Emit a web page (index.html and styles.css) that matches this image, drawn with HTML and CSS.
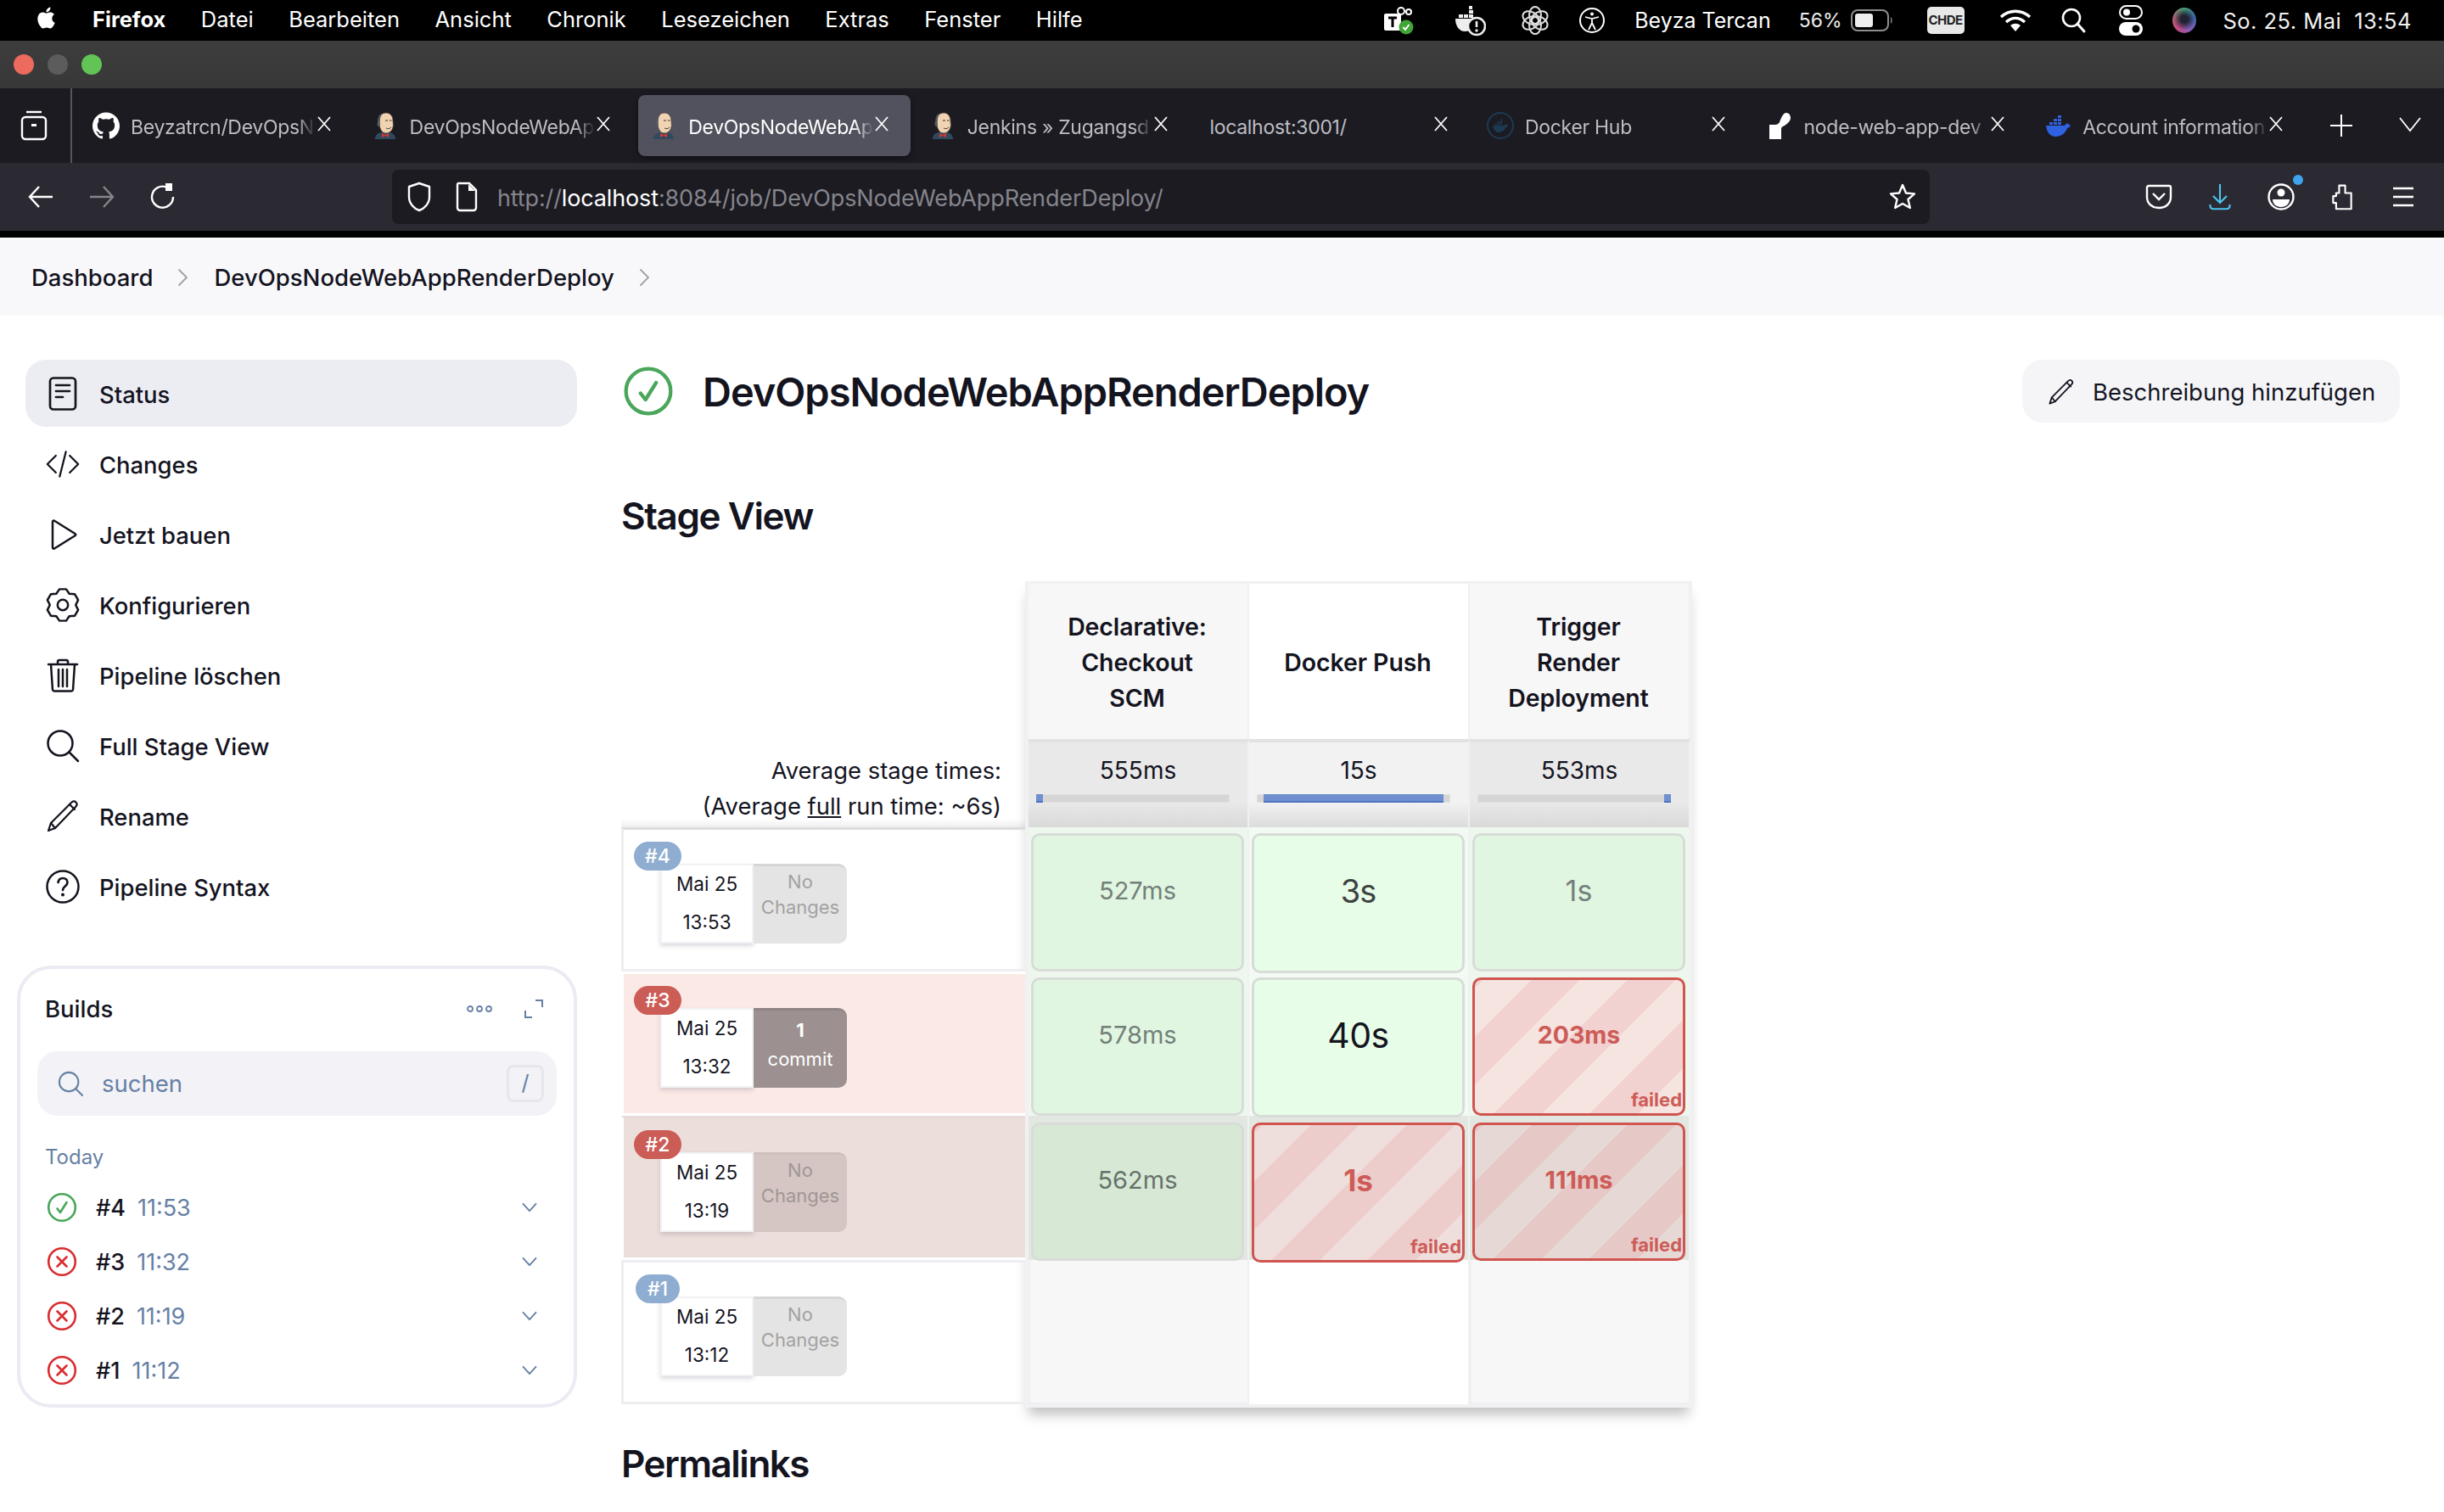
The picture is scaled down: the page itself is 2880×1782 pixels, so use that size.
FILE: index.html
```html
<!DOCTYPE html>
<html lang="de">
<head>
<meta charset="utf-8">
<title>DevOpsNodeWebAppRenderDeploy</title>
<link rel="stylesheet" href="styles.css">
</head>
<body>
<svg class="sprite" aria-hidden="true">
  <symbol id="jenkins" viewBox="0 0 26 32">
    <path d="M1 32c0-4 2-7 7-8l5 1 5-1c5 1 7 4 7 8z" fill="#2f4a5e"/>
    <path d="M6 11C5 5 9 1 14 1c5 0 8 4 8 9 0 3 1 5 0 8-1 4-4 7-8 7-4 0-6-3-7-6-1-2-1-5-1-8z" fill="#efd3b2" stroke="#4a4038" stroke-width=".8"/>
    <path d="M8 2C5 4 4 8 4 12c-1 1-1 4 1 5l2 1c0-3-1-6 0-9 0-3 1-5 3-7z" fill="#55585c"/>
    <path d="M13 10h3M18 10h2.500" stroke="#3a3028" stroke-width="1"/>
    <path d="M14 19c2 1 4 1 6-1" fill="none" stroke="#3a3028" stroke-width=".9"/>
    <path d="M9 25l4 2 4-2v5l-4-2-4 2z" fill="#d33833"/>
  </symbol>
  <symbol id="close" viewBox="0 0 18 18"><path d="M2 1l14 16M16 1L2 17" fill="none" stroke="#fff" stroke-width="1.800"/></symbol>
  <symbol id="github" viewBox="0 0 24 24"><path fill="#fff" d="M12 .297c-6.63 0-12 5.373-12 12 0 5.303 3.438 9.8 8.205 11.385.6.113.82-.258.82-.577 0-.285-.01-1.04-.015-2.04-3.338.724-4.042-1.61-4.042-1.61C4.422 18.07 3.633 17.7 3.633 17.7c-1.087-.744.084-.729.084-.729 1.205.084 1.838 1.236 1.838 1.236 1.07 1.835 2.809 1.305 3.495.998.108-.776.417-1.305.76-1.605-2.665-.3-5.466-1.332-5.466-5.93 0-1.31.465-2.38 1.235-3.22-.135-.303-.54-1.523.105-3.176 0 0 1.005-.322 3.3 1.23.96-.267 1.98-.399 3-.405 1.02.006 2.04.138 3 .405 2.28-1.552 3.285-1.23 3.285-1.23.645 1.653.24 2.873.12 3.176.765.84 1.23 1.91 1.23 3.22 0 4.61-2.805 5.625-5.475 5.92.42.36.81 1.096.81 2.22 0 1.606-.015 2.896-.015 3.286 0 .315.21.69.825.57C20.565 22.092 24 17.592 24 12.297c0-6.627-5.373-12-12-12"/></symbol>
  <symbol id="whale" viewBox="0 0 32 32">
    <path fill="currentColor" d="M2 16h22c1-2 3-3 4-2 1 .6 2 1.400 3 2-1 2-3 3-4 3-2 6-7 10-14 10C7 29 3 24 2 16z"/>
    <path fill="currentColor" d="M6 12h4v3H6zM11 12h4v3h-4zM16 12h4v3h-4zM11 8h4v3h-4zM16 8h4v3h-4zM16 4h4v3h-4z"/>
  </symbol>
  <symbol id="chev" viewBox="0 0 24 24"><path d="M3 7l9 10 9-10" fill="none" stroke="currentColor" stroke-width="2.200" stroke-linecap="round" stroke-linejoin="round"/></symbol>
  <symbol id="crumb" viewBox="0 0 16 24"><path d="M3 3l9 9-9 9" fill="none" stroke="#9ea0ab" stroke-width="1.800" stroke-linecap="round" stroke-linejoin="round"/></symbol>
  <symbol id="pencil" viewBox="0 0 40 40"><g fill="none" stroke="currentColor" stroke-width="2.200" stroke-linejoin="round" stroke-linecap="round"><path d="M3 37l3-9L30 4c2-2 4-2 5.500-.5s1.500 3.500-.5 5.500L11 34z"/><path d="M28 6l6 6M6 28l5 6"/></g></symbol>
  <symbol id="fail" viewBox="0 0 36 36"><circle cx="18" cy="18" r="15.800" fill="none" stroke="#d92c2f" stroke-width="2.600"/><path d="M12.500 12.500l11 11M23.500 12.500l-11 11" fill="none" stroke="#d92c2f" stroke-width="2.600" stroke-linecap="round"/></symbol>
  <symbol id="ok" viewBox="0 0 36 36"><circle cx="18" cy="18" r="15.800" fill="none" stroke="#4aa65a" stroke-width="2.600"/><path d="M12.500 19.500l3.500 4.500L23.500 12" fill="none" stroke="#4aa65a" stroke-width="2.600" stroke-linecap="round" stroke-linejoin="round"/></symbol>
</svg>

<header class="menubar">
  <svg class="m-apple" viewBox="0 0 24 24"><path fill="#fff" d="M12.152 6.896c-.948 0-2.415-1.078-3.96-1.04-2.04.027-3.91 1.183-4.961 3.014-2.117 3.675-.546 9.103 1.519 12.09 1.013 1.454 2.208 3.09 3.792 3.039 1.52-.065 2.09-.987 3.935-.987 1.831 0 2.35.987 3.96.948 1.637-.026 2.676-1.48 3.676-2.948 1.156-1.688 1.636-3.325 1.662-3.415-.039-.013-3.182-1.221-3.22-4.857-.026-3.04 2.48-4.494 2.597-4.559-1.429-2.09-3.623-2.324-4.39-2.376-2-.156-3.675 1.09-4.61 1.09zM15.53 3.83c.843-1.012 1.4-2.427 1.245-3.83-1.207.052-2.662.805-3.532 1.818-.78.896-1.454 2.338-1.273 3.714 1.338.104 2.715-.688 3.559-1.701"/></svg>
  <nav class="menu-left">
    <span class="menu-app">Firefox</span><span>Datei</span><span>Bearbeiten</span><span>Ansicht</span><span>Chronik</span><span>Lesezeichen</span><span>Extras</span><span>Fenster</span><span>Hilfe</span>
  </nav>
  <div class="menu-right">
    <svg class="s-teams" viewBox="0 0 40 40"><g fill="#fff"><rect x="4" y="12" width="20" height="20" rx="2"/><circle cx="24" cy="9" r="4" fill="none" stroke="#fff" stroke-width="2"/><circle cx="33" cy="10" r="3" fill="none" stroke="#fff" stroke-width="2"/></g><path d="M9 17h10M14 17v11" stroke="#000" stroke-width="3"/><path d="M24 22h10v12H24z" fill="#fff"/><circle cx="30" cy="28" r="8.500" fill="#3fa535"/><path d="M26.500 28l2.500 3 4.500-6" fill="none" stroke="#fff" stroke-width="2"/></svg>
    <svg class="s-docker" viewBox="0 0 40 40"><path d="M4 18h22c1 7-2 15-11 15-7 0-11-7-11-15z" fill="#eee"/><path d="M8 13h5v4H8zM14 13h5v4h-5zM20 13h5v4h-5zM20 8h5v4h-5zM20 3h4v4h-4z" fill="#eee"/><circle cx="29" cy="27" r="10" fill="#000" stroke="#eee" stroke-width="2.500"/><path d="M29 21v7" stroke="#eee" stroke-width="2.600"/><circle cx="29" cy="32" r="1.700" fill="#eee"/></svg>
    <svg class="s-openai" viewBox="0 0 36 36"><g fill="none" stroke="#ddd" stroke-width="2"><ellipse cx="18" cy="12" rx="7" ry="10"/><ellipse cx="18" cy="12" rx="7" ry="10" transform="rotate(60 18 18)"/><ellipse cx="18" cy="12" rx="7" ry="10" transform="rotate(120 18 18)"/><ellipse cx="18" cy="12" rx="7" ry="10" transform="rotate(180 18 18)"/><ellipse cx="18" cy="12" rx="7" ry="10" transform="rotate(240 18 18)"/><ellipse cx="18" cy="12" rx="7" ry="10" transform="rotate(300 18 18)"/></g></svg>
    <svg class="s-access" viewBox="0 0 36 36"><circle cx="18" cy="18" r="14" fill="none" stroke="#fff" stroke-width="2"/><circle cx="18" cy="10.500" r="2" fill="#fff"/><path d="M10 14l8 2 8-2M18 16v5l-4 8M18 21l4 8" fill="none" stroke="#fff" stroke-width="1.800"/></svg>
    <span class="s-name">Beyza Tercan</span>
    <span class="s-pct">56%</span>
    <svg class="s-batt" viewBox="0 0 50 28"><rect x="1" y="2" width="43" height="24" rx="7" fill="none" stroke="#8d8d8d" stroke-width="2"/><rect x="5" y="6" width="21" height="16" rx="3" fill="#eee"/><path d="M47 10c2 1 2 7 0 8z" fill="#8d8d8d"/></svg>
    <span class="s-chde">CHDE</span>
    <svg class="s-wifi" viewBox="0 0 40 28"><g fill="none" stroke="#fff" stroke-width="3.400"><path d="M3 10c10-9 24-9 34 0"/><path d="M9 16c7-6 15-6 22 0"/></g><path d="M14 20c4-3 8-3 12 0l-6 7z" fill="#fff"/></svg>
    <svg class="s-search" viewBox="0 0 32 32"><circle cx="13" cy="13" r="10" fill="none" stroke="#fff" stroke-width="2.600"/><path d="M20 20l8 9" stroke="#fff" stroke-width="3" stroke-linecap="round"/></svg>
    <svg class="s-ctrl" viewBox="0 0 30 36"><rect x="2" y="1" width="26" height="15" rx="7.500" fill="none" stroke="#fff" stroke-width="2"/><circle cx="10" cy="8.500" r="4" fill="#fff"/><rect x="1" y="20" width="28" height="16" rx="8" fill="#fff"/><circle cx="21" cy="28" r="4.500" fill="#000"/></svg>
    <span class="s-siri"></span>
    <span class="s-date">So. 25. Mai&nbsp; 13:54</span>
  </div>
</header>

<div class="titlebar">
  <span class="light light-red"></span><span class="light light-gray"></span><span class="light light-green"></span>
</div>

<div class="tabstrip">
  <div class="tabview">
    <svg class="ic-view" viewBox="0 0 32 36"><g fill="none" stroke="#fff" stroke-width="2.400"><path d="M7 2h18"/><rect x="2" y="8" width="28" height="26" rx="4"/></g><rect x="13" y="16" width="6" height="3" fill="#fff"/></svg>
  </div>
  <div class="tabs">
    <div class="tab"><svg class="fav fav-round"><use href="#github"/></svg><span class="tab-title">Beyzatrcn/DevOpsN</span><svg class="tab-x"><use href="#close"/></svg></div>
    <div class="tab"><svg class="fav"><use href="#jenkins"/></svg><span class="tab-title">DevOpsNodeWebAp</span><svg class="tab-x"><use href="#close"/></svg></div>
    <div class="tab tab-active"><svg class="fav"><use href="#jenkins"/></svg><span class="tab-title">DevOpsNodeWebAp</span><svg class="tab-x"><use href="#close"/></svg></div>
    <div class="tab"><svg class="fav"><use href="#jenkins"/></svg><span class="tab-title">Jenkins » Zugangsd</span><svg class="tab-x"><use href="#close"/></svg></div>
    <div class="tab tab-nofav"><span class="tab-title">localhost:3001/</span><svg class="tab-x"><use href="#close"/></svg></div>
    <div class="tab"><svg class="fav fav-hub" viewBox="0 0 32 32"><circle cx="16" cy="16" r="15" fill="none" stroke="#1d3a53" stroke-width="2"/><g transform="translate(6 6) scale(.62)" color="#1d3a53"><use href="#whale" width="32" height="32"/></g></svg><span class="tab-title">Docker Hub</span><svg class="tab-x"><use href="#close"/></svg></div>
    <div class="tab"><svg class="fav" viewBox="0 0 32 32"><path fill="#fff" d="M4 32V15h7c2 0 4-1 5-3 2-5 4-11 8-11 4 0 5 4 5 6 0 4-5 8-9 10-2 1-2 2-2 4v11H4z"/></svg><span class="tab-title">node-web-app-dev</span><svg class="tab-x"><use href="#close"/></svg></div>
    <div class="tab"><svg class="fav fav-blue"><use href="#whale"/></svg><span class="tab-title">Account information</span><svg class="tab-x"><use href="#close"/></svg></div>
  </div>
  <svg class="tab-plus" viewBox="0 0 26 26"><path d="M13 0v26M0 13h26" stroke="#fff" stroke-width="2"/></svg>
  <svg class="tab-list" viewBox="0 0 26 26"><path d="M1 6l12 15L25 6" fill="none" stroke="#fff" stroke-width="1.800"/></svg>
</div>

<div class="toolbar">
  <svg class="tb-ic" viewBox="0 0 32 32"><path d="M30 16H3M14 4L3 16l11 12" fill="none" stroke="#fff" stroke-width="2.400"/></svg>
  <svg class="tb-ic tb-gap tb-dim" viewBox="0 0 32 32"><path d="M2 16h27M18 4l11 12-11 12" fill="none" stroke="#85858c" stroke-width="2.400"/></svg>
  <svg class="tb-ic tb-gap" viewBox="0 0 32 32"><path d="M20 4.500A12.500 12.500 0 1 0 28 16" fill="none" stroke="#fff" stroke-width="2.400"/><path d="M19 0h8v9h-8z" fill="#fff"/></svg>
  <div class="urlbar">
    <svg class="url-ic" viewBox="0 0 28 36"><path d="M14 2l12 4v12c0 8-6 14-12 16C8 32 2 26 2 18V6z" fill="none" stroke="#fff" stroke-width="2.400" stroke-linejoin="round"/></svg>
    <svg class="url-ic url-page" viewBox="0 0 28 36"><path d="M4 2h13l8 8v21a3 3 0 0 1-3 3H6a3 3 0 0 1-3-3V3z" fill="none" stroke="#fff" stroke-width="2.400"/><path d="M16 3v8h8z" fill="#fff"/></svg>
    <span class="url-text">http://<b class="url-host">localhost</b>:8084/job/DevOpsNodeWebAppRenderDeploy/</span>
    <svg class="url-star" viewBox="0 0 32 32"><path d="M16 2l4 9.500 10 .9-7.500 6.600 2.300 10L16 24l-8.800 5 2.300-10L2 12.400l10-.9z" fill="none" stroke="#fff" stroke-width="2.400" stroke-linejoin="round"/></svg>
  </div>
  <div class="tb-right">
    <svg class="tb-r" viewBox="0 0 32 32"><path d="M4 3h24a2 2 0 0 1 2 2v11c0 8-6 13-14 13S2 24 2 16V5a2 2 0 0 1 2-2z" fill="none" stroke="#fff" stroke-width="2.400"/><path d="M9 12l7 7 7-7" fill="none" stroke="#fff" stroke-width="2.400"/></svg>
    <svg class="tb-r" viewBox="0 0 32 36"><path d="M16 1v24M7 17l9 9 9-9M3 28v2a4 4 0 0 0 4 4h18a4 4 0 0 0 4-4v-2" fill="none" stroke="#4ec3ee" stroke-width="2.400"/></svg>
    <span class="tb-acc">
      <svg class="tb-r" viewBox="0 0 32 32"><circle cx="16" cy="16" r="14.500" fill="none" stroke="#fff" stroke-width="2.400"/><circle cx="16" cy="11" r="4.500" fill="#fff"/><path d="M6 19h20c0 5-4 9-10 9S6 24 6 19z" fill="#fff"/></svg>
      <span class="tb-dot"></span>
    </span>
    <svg class="tb-r" viewBox="0 0 32 36"><path d="M12 3h8v10h8v21H8v-8H4v-9h4v-4h4z" fill="none" stroke="#fff" stroke-width="2.400" stroke-linejoin="round"/></svg>
    <svg class="tb-r" viewBox="0 0 32 32"><path d="M4 6h24M4 16h24M4 26h24" stroke="#fff" stroke-width="2.400"/></svg>
  </div>
</div>
<div class="chrome-edge"></div>

<div class="breadcrumbs">
  <span>Dashboard</span><svg class="crumb-sep"><use href="#crumb"/></svg>
  <span>DevOpsNodeWebAppRenderDeploy</span><svg class="crumb-sep"><use href="#crumb"/></svg>
</div>

<div class="layout">
  <aside class="sidebar">
    <ul class="tasks">
      <li class="task task-on"><svg class="task-ic" viewBox="0 0 40 40"><g fill="none" stroke="currentColor" stroke-width="2.700" stroke-linecap="round"><rect x="5" y="1.500" width="30" height="37" rx="4"/><path d="M12 10h16M12 17h16M12 24h8"/></g></svg>Status</li>
      <li class="task"><svg class="task-ic" viewBox="0 0 44 40"><path d="M13 9L2 20l11 11M31 9l11 11-11 11M26 4l-8 32" fill="none" stroke="currentColor" stroke-width="2.500" stroke-linecap="round" stroke-linejoin="round"/></svg>Changes</li>
      <li class="task"><svg class="task-ic" viewBox="0 0 40 40"><path d="M8 5c0-1.500 1-2 2.500-1l24 15c1 .6 1 1.600 0 2.200l-24 15c-1.500 1-2.500.4-2.500-1z" fill="none" stroke="currentColor" stroke-width="2.500" stroke-linejoin="round"/></svg>Jetzt bauen</li>
      <li class="task"><svg class="task-ic" viewBox="3 3 42 42"><polygon points="19.840,4.440 28.160,4.440 32,10.140 38.860,10.620 43.020,17.820 40,24 43.020,30.180 38.860,37.380 32,37.860 28.160,43.560 19.840,43.560 16,37.860 9.140,37.380 4.980,30.180 8,24 4.980,17.820 9.140,10.620 16,10.140" fill="none" stroke="currentColor" stroke-width="2.600" stroke-linejoin="round"/><circle cx="24" cy="24" r="6.500" fill="none" stroke="currentColor" stroke-width="2.600"/></svg>Konfigurieren</li>
      <li class="task"><svg class="task-ic" viewBox="0 0 40 40"><g fill="none" stroke="currentColor" stroke-width="2.500" stroke-linecap="round" stroke-linejoin="round"><path d="M3 7h34M14 7V4a2 2 0 0 1 2-2h8a2 2 0 0 1 2 2v3M6 7l2 30a2 2 0 0 0 2 1.500h20a2 2 0 0 0 2-1.500l2-30"/><path d="M15 13v20M20 13v20M25 13v20"/></g></svg>Pipeline löschen</li>
      <li class="task"><svg class="task-ic" viewBox="0 0 40 40"><circle cx="17" cy="17" r="14.500" fill="none" stroke="currentColor" stroke-width="2.500"/><path d="M28 28l10 10" stroke="currentColor" stroke-width="2.500" stroke-linecap="round"/></svg>Full Stage View</li>
      <li class="task"><svg class="task-ic"><use href="#pencil"/></svg>Rename</li>
      <li class="task"><svg class="task-ic" viewBox="0 0 40 40"><circle cx="20" cy="20" r="18.500" fill="none" stroke="currentColor" stroke-width="2.500"/><path d="M14.500 15c.5-3.500 3-5 5.500-5 3 0 5.500 2 5.500 5 0 4.500-5.500 4.500-5.500 9" fill="none" stroke="currentColor" stroke-width="2.700" stroke-linecap="round"/><circle cx="20" cy="29.500" r="2" fill="currentColor"/></svg>Pipeline Syntax</li>
    </ul>

    <section class="builds">
      <div class="builds-head">
        <span class="builds-title">Builds</span>
        <svg class="builds-dots" viewBox="0 0 32 10"><g fill="none" stroke="currentColor" stroke-width="1.800"><circle cx="5" cy="5" r="3"/><circle cx="16" cy="5" r="3"/><circle cx="27" cy="5" r="3"/></g></svg>
        <svg class="builds-exp" viewBox="0 0 24 24"><path d="M14 2h8v8M2 14v8h8" fill="none" stroke="currentColor" stroke-width="2"/></svg>
      </div>
      <div class="search">
        <svg class="search-ic" viewBox="0 0 32 32"><circle cx="14" cy="14" r="12" fill="none" stroke="currentColor" stroke-width="2.200"/><path d="M23 23l8 8" stroke="currentColor" stroke-width="2.200" stroke-linecap="round"/></svg>
        <span class="search-text">suchen</span>
        <span class="search-key">/</span>
      </div>
      <div class="builds-day">Today</div>
      <div class="build"><svg class="build-ic"><use href="#ok"/></svg><span class="build-num">#4</span><span class="build-time">11:53</span><svg class="build-chev"><use href="#chev"/></svg></div>
      <div class="build"><svg class="build-ic"><use href="#fail"/></svg><span class="build-num">#3</span><span class="build-time">11:32</span><svg class="build-chev"><use href="#chev"/></svg></div>
      <div class="build"><svg class="build-ic"><use href="#fail"/></svg><span class="build-num">#2</span><span class="build-time">11:19</span><svg class="build-chev"><use href="#chev"/></svg></div>
      <div class="build"><svg class="build-ic"><use href="#fail"/></svg><span class="build-num">#1</span><span class="build-time">11:12</span><svg class="build-chev"><use href="#chev"/></svg></div>
    </section>
  </aside>

  <main class="main">
    <div class="title-row">
      <svg class="title-ic"><use href="#ok"/></svg>
      <h1 class="title">DevOpsNodeWebAppRenderDeploy</h1>
      <button class="add-desc"><svg class="add-ic"><use href="#pencil"/></svg>Beschreibung hinzufügen</button>
    </div>
    <h2 class="section-title">Stage View</h2>

    <div class="stage">
      <div class="stage-left">
        <div class="avg"><span>Average stage times:</span><span>(Average <u>full</u> run time: ~6s)</span></div>
        <div class="run run-first">
          <span class="badge badge-ok">#4</span>
          <div class="run-date"><span>Mai 25</span><span>13:53</span></div>
          <div class="run-changes">No<br>Changes</div>
        </div>
        <div class="run run-fail">
          <span class="badge badge-bad">#3</span>
          <div class="run-date"><span>Mai 25</span><span>13:32</span></div>
          <div class="run-changes run-commit"><b>1</b><br>commit</div>
        </div>
        <div class="run run-fail2">
          <span class="badge badge-bad">#2</span>
          <div class="run-date"><span>Mai 25</span><span>13:19</span></div>
          <div class="run-changes run-changes2">No<br>Changes</div>
        </div>
        <div class="run">
          <span class="badge badge-ok badge-small">#1</span>
          <div class="run-date"><span>Mai 25</span><span>13:12</span></div>
          <div class="run-changes">No<br>Changes</div>
        </div>
      </div>

      <div class="stage-grid">
        <div class="sh">Declarative:<br>Checkout<br>SCM</div>
        <div class="sh sh-even">Docker Push</div>
        <div class="sh">Trigger<br>Render<br>Deployment</div>

        <div class="st"><span>555ms</span><div class="bar"><i class="fill fill-a"></i></div></div>
        <div class="st st-even"><span>15s</span><div class="bar"><i class="fill fill-b"></i></div></div>
        <div class="st"><span>553ms</span><div class="bar"><i class="fill fill-c"></i></div></div>

        <div class="cell"><div class="box ok dim">527ms</div></div>
        <div class="cell cell-even"><div class="box ok strong s3">3s</div></div>
        <div class="cell"><div class="box ok dim s1">1s</div></div>

        <div class="cell"><div class="box ok dim">578ms</div></div>
        <div class="cell cell-even"><div class="box ok strong s40">40s</div></div>
        <div class="cell"><div class="box bad bad1">203ms<span class="failed">failed</span></div></div>

        <div class="cell cell-r2"><div class="box ok2 dim">562ms</div></div>
        <div class="cell cell-r2 cell-even"><div class="box bad bad2">1s<span class="failed">failed</span></div></div>
        <div class="cell cell-r2"><div class="box bad bad3">111ms<span class="failed">failed</span></div></div>

        <div class="cell cell-empty"></div>
        <div class="cell cell-even cell-blank"></div>
        <div class="cell cell-empty"></div>
      </div>
    </div>

    <h2 class="section-title perma">Permalinks</h2>
  </main>
</div>
</body>
</html>
```
FILE: styles.css
```css
* { box-sizing: border-box; }
html, body { margin: 0; padding: 0; }
body {
  width: 2880px;
  height: 1782px;
  overflow: hidden;
  background: #fff;
  color: #14141f;
  font-family: Inter, "Noto Sans", sans-serif;
}
.sprite { width: 0; height: 0; position: absolute; }

/* macOS menu bar */
.menubar {
  height: 48px;
  background: #000;
  color: #fff;
  display: flex;
  align-items: center;
  padding: 0 38px 0 42px;
  font-size: 25.500px;
}
.m-apple { width: 25px; height: 32px; margin-top: -6px; }
.menu-left { display: flex; gap: 41.500px; margin-left: 42px; white-space: nowrap; padding-bottom: 3px; }
.menu-app { font-weight: 700; }
.menu-right { margin-left: auto; display: flex; align-items: center; white-space: nowrap; }
.s-teams { width: 40px; height: 40px; }
.s-docker { width: 40px; height: 40px; margin-left: 44px; }
.s-openai { width: 36px; height: 36px; margin-left: 40px; }
.s-access { width: 36px; height: 36px; margin-left: 31px; }
.s-name { margin-left: 32px; font-size: 25px; }
.s-pct { margin-left: 33px; font-size: 23px; color: #eee; }
.s-batt { width: 50px; height: 28px; margin-left: 10px; }
.s-chde { width: 44px; margin-left: 40px; background: #e8e8e8; color: #222; border-radius: 5px; font-size: 15px; font-weight: 700; text-align: center; line-height: 32px; height: 32px; letter-spacing: -.5px; }
.s-wifi { width: 40px; height: 28px; margin-left: 40px; }
.s-search { width: 32px; height: 32px; margin-left: 33px; }
.s-ctrl { width: 30px; height: 36px; margin-left: 36px; }
.s-siri { width: 28px; height: 30px; margin-left: 34px; border-radius: 50%; background: radial-gradient(circle at 50% 45%, #223 0 20%, transparent 60%), conic-gradient(#46a37b, #3d6db0, #7d5fb5, #c44a86, #b86a76, #46a37b); }
.s-date { margin-left: 32px; color: #f2f2f2; letter-spacing: .45px; }

/* Browser chrome */
.titlebar {
  height: 56px;
  background: linear-gradient(#3d3d3d, #383838);
  display: flex;
  align-items: center;
  gap: 16px;
  padding-left: 16px;
}
.light { width: 24px; height: 24px; border-radius: 50%; }
.light-red { background: #ec6a5e; }
.light-gray { background: #5c5c5c; }
.light-green { background: #61c454; }

.tabstrip {
  height: 88px;
  background: #1c1b22;
  display: flex;
  align-items: center;
  color: #fff;
  font-size: 23px;
}
.tabview {
  width: 85px;
  height: 88px;
  display: flex;
  align-items: center;
  justify-content: center;
  border-right: 2px solid #55555c;
  padding-right: 4px;
}
.ic-view { width: 32px; height: 36px; }
.tabs { display: flex; gap: 8px; margin-left: 10px; }
.tab {
  width: 320.600px;
  height: 72px;
  border-radius: 8px;
  display: flex;
  align-items: center;
  padding-left: 14px;
  flex: none;
}
.tab-active { background: #52525e; box-shadow: 0 2px 6px rgba(0,0,0,.5); }
.fav { width: 32px; height: 32px; flex: none; }
.fav-blue { color: #2f62e0; }
.tab-title {
  width: 218px;
  margin-left: 13px;
  padding-top: 3px;
  white-space: nowrap;
  overflow: hidden;
  color: #bdbdc2;
  letter-spacing: -.3px;
  -webkit-mask-image: linear-gradient(90deg, #000 90%, transparent);
  mask-image: linear-gradient(90deg, #000 90%, transparent);
}
.tab-active .tab-title { color: #fff; }
.tab-nofav .tab-title { margin-left: 2px; width: 263px; -webkit-mask-image: none; mask-image: none; }
.tab-x { width: 18px; height: 18px; margin-left: 1px; flex: none; margin-top: -4px; }
.tab-plus { width: 26px; height: 26px; margin-left: 30px; }
.tab-list { width: 26px; height: 26px; margin-left: 55px; margin-top: -4px; }

.toolbar {
  height: 80px;
  background: #2b2a33;
  display: flex;
  align-items: center;
  padding-left: 32px;
}
.tb-ic { width: 32px; height: 32px; flex: none; }
.tb-gap { margin-left: 40px; }
.urlbar {
  width: 1812px;
  height: 64px;
  margin-left: 254px;
  background: #1c1b22;
  border-radius: 8px;
  display: flex;
  align-items: center;
  padding: 0 16px 0 18px;
  flex: none;
}
.url-ic { width: 28px; height: 36px; flex: none; }
.url-page { margin-left: 28px; }
.url-text { margin-left: 22px; font-size: 27px; color: #85858c; white-space: nowrap; letter-spacing: -.14px; padding-top: 2px; }
.url-host { color: #fff; font-weight: 400; }
.url-star { width: 32px; height: 32px; margin-left: auto; }
.tb-right { margin-left: auto; display: flex; align-items: center; gap: 40px; padding-right: 32px; }
.tb-r { width: 32px; height: 32px; display: block; }
.tb-acc { position: relative; display: block; }
.tb-dot { position: absolute; top: -10px; right: -10px; width: 12px; height: 12px; border-radius: 50%; background: #3fa3ee; }
.chrome-edge { height: 8px; background: #000; }

/* Breadcrumbs */
.breadcrumbs {
  height: 92px;
  background: #f8f8fa;
  display: flex;
  align-items: center;
  padding: 2px 0 0 37px;
  font-size: 27.500px;
  font-weight: 500;
}
.crumb-sep { width: 16px; height: 24px; margin: 0 28px 0 28px; }

/* Layout */
.layout { display: flex; align-items: flex-start; }
.sidebar { width: 660px; margin-left: 20px; padding-top: 52px; flex: none; }
.main { margin-left: 52px; width: 2096px; padding-top: 52px; }

.tasks { list-style: none; margin: 0 0 0 10px; padding: 0; display: flex; flex-direction: column; gap: 4px; }
.task {
  height: 79px;
  border-radius: 24px;
  display: flex;
  align-items: center;
  font-size: 27.400px;
  font-weight: 450;
  padding: 2px 0 0 87px;
  position: relative;
}
.task-on { background: #ecedf3; }
.task-ic { width: 40px; height: 40px; position: absolute; left: 24px; top: 20px; }

/* Builds card */
.builds {
  margin-top: 54px;
  width: 660px;
  height: 521px;
  border: 4px solid #eaebf3;
  border-radius: 40px;
  padding: 0 20px;
}
.builds-head { display: flex; align-items: center; height: 94px; padding-left: 9px; }
.builds-title { font-size: 27.500px; font-weight: 500; margin-right: auto; }
.builds-dots { width: 32px; height: 10px; color: #6680a4; }
.builds-exp { width: 24px; height: 24px; color: #6680a4; margin: 0 15px 0 36px; }
.search {
  height: 76px;
  background: #f2f2f7;
  border-radius: 24px;
  display: flex;
  align-items: center;
  margin-top: 3px;
  padding: 0 15px 0 24px;
  color: #6680a4;
  font-size: 27.500px;
}
.search-ic { width: 30px; height: 30px; color: #6680a4; }
.search-text { margin-left: 22px; }
.search-key {
  margin-left: auto;
  width: 44px;
  height: 44px;
  border: 3px solid #e6e6ee;
  border-radius: 8px;
  text-align: center;
  font-size: 25px;
  line-height: 36px;
}
.builds-day { color: #6680a4; font-size: 24px; font-weight: 400; margin: 32px 0 0 9px; line-height: 34px; }
.build { height: 64px; display: flex; align-items: center; padding-left: 11px; font-size: 27px; font-weight: 500; }
.builds-day + .build { margin-top: 10px; }
.build-ic { width: 36px; height: 36px; }
.build-num { margin-left: 22px; }
.build-time { margin-left: 14px; color: #6680a4; font-weight: 400; }
.build-chev { width: 20px; height: 20px; margin-left: auto; margin-right: 22px; color: #6680a4; }

/* Title row */
.title-row { height: 74px; display: flex; align-items: center; padding-left: 2px; }
.title-ic { width: 60px; height: 60px; flex: none; }
.title { margin: 0 0 0 34px; font-size: 47px; font-weight: 600; letter-spacing: -1.050px; white-space: nowrap; }
.add-desc {
  margin-left: auto;
  height: 74px;
  width: 445px;
  border: 0;
  border-radius: 24px;
  background: #f5f5f8;
  color: #14141f;
  font: 400 27.500px Inter, sans-serif;
  display: flex;
  align-items: center;
  padding: 1px 0 0 30px;
  white-space: nowrap;
}
.add-ic { width: 32px; height: 32px; margin-right: 21px; }
.section-title { margin: 83px 0 50px; font-size: 44px; line-height: 54px; font-weight: 600; letter-spacing: -1.400px; }
.perma { margin: 0; position: relative; top: 39px; letter-spacing: -1.500px; }

/* Stage view */
.stage { display: flex; width: 1262px; }
.stage-left { width: 476px; flex: none; }
.avg {
  height: 290px;
  display: flex;
  flex-direction: column;
  justify-content: flex-end;
  align-items: flex-end;
  padding: 0 28px 4px 0;
  font-size: 27.400px;
  line-height: 42px;
  background: linear-gradient(transparent 280px, #eee);
}
.run {
  height: 170px;
  border: 3px solid #eeeef0;
  border-right: 0;
  position: relative;
  display: flex;
  padding: 40px 0 0 43px;
}
.run-first { border-top-color: #dcdcdc; }
.run-fail { background: #fbe9e6; border-color: #fff; }
.run-fail2 { background: #ecdeda; border-color: #fff; border-top-color: #e6dbd8; }
.badge {
  position: absolute;
  left: 12px;
  top: 14px;
  width: 56px;
  height: 34px;
  border-radius: 17px;
  color: #fff;
  font-size: 23px;
  font-weight: 500;
  text-align: center;
  line-height: 34px;
  z-index: 1;
}
.badge-small { width: 52px; left: 14px; }
.badge-ok { background: #8fadd0; }
.badge-bad { background: #cc5c56; }
.run-date {
  width: 110px;
  height: 94px;
  background: #fff;
  border: 2px solid #f2f2f6;
  box-shadow: 0 3px 5px rgba(60,60,90,.18);
  display: flex;
  flex-direction: column;
  align-items: center;
  font-size: 22.500px;
  padding-top: 8px;
  gap: 18px;
  line-height: 27px;
}
.run-changes {
  width: 110px;
  height: 94px;
  background: #e4e4e4;
  border-top: 3px solid #d6d6d6;
  border-radius: 0 10px 10px 0;
  color: #a2a2a2;
  font-size: 22px;
  line-height: 30px;
  text-align: center;
  padding-top: 3px;
}
.run-changes2 { background: #d5c6c3; border-top-color: #cfc0bd; color: #a09694; }
.run-commit { background: #9c9190; color: #fff; border-top-color: #8f8584; padding-top: 6px; line-height: 34px; }

.stage-grid {
  width: 786px;
  height: 974px;
  flex: none;
  display: grid;
  grid-template-columns: repeat(3, 260px);
  grid-template-rows: 183px 104px repeat(4, 170px);
  padding: 3px 2px 4px 4px;
  background: #f1f1f4;
  box-shadow: 0 12px 14px -4px rgba(0,0,0,.25);
}
.sh {
  background: #f7f7f7;
  border-right: 2px solid #f0f0f2;
  text-align: center;
  font-size: 28.500px;
  font-weight: 600;
  line-height: 42px;
  display: flex;
  align-items: center;
  justify-content: center;
  padding: 2px 2px 0 0;
  letter-spacing: -.1px;
}
.sh-even { background: #fff; }
.st {
  background: linear-gradient(#e9e9e9 70%, #d9d9d9);
  border-top: 4px solid #e2e2e2;
  border-right: 2px solid #f0f0f2;
  text-align: center;
  font-size: 28px;
  padding-top: 16px;
  line-height: 34px;
}
.st-even { background: linear-gradient(#f2f2f2 70%, #dcdcdc); }
.bar {
  position: relative;
  height: 10px;
  margin: 11px 21px 0 9px;
  background: #d6d6d6;
  box-shadow: inset 0 0 0 1px #e0e0e0;
}
.fill { position: absolute; top: 0; bottom: 0; background: #6f8fd0; border-bottom: 2px solid #4e72c0; }
.fill-a { left: 0; width: 8px; }
.fill-b { left: 8px; right: 8px; }
.fill-c { right: 0; width: 8px; }

.cell { background: #eef7ee; padding: 7px 0 0 3px; border-right: 2px solid #eff2ef; }
.cell-even { background: #f3faf3; }
.cell-r2 { background: #e3e7e1; padding-top: 8px; }
.cell-empty { background: #f7f7f7; border: 2px solid #efeff1; border-top: 0; }
.cell-blank { background: #fff; }
.box {
  width: 251px;
  height: 163px;
  border-radius: 10px;
  border: 3px solid #d8dcd8;
  text-align: center;
  font-size: 29px;
  line-height: 46px;
  padding-top: 42px;
  position: relative;
}
.cell-even .box { height: 165px; }
.ok { background: #e1f6e1; }
.cell-even .ok { background: #e8fde8; }
.ok2 { background: #d7e9d5; }
.dim { color: #73807a; }
.cell-r2 .dim { color: #67726b; }
.strong { color: #3c4240; }
.s1 { font-size: 34px; }
.s3 { font-size: 38px; letter-spacing: -1px; }
.s40 { font-size: 41px; color: #14141f; letter-spacing: -.5px; }
.bad {
  --a: #f2d2d0;
  --b: #f5e4e0;
  border-color: #d0544f;
  color: #cd5c58;
  font-weight: 700;
  background: repeating-linear-gradient(135deg, var(--a) 0 7px, var(--b) 7px 47px, var(--a) 47px 80px);
}
.bad1 { font-size: 28.500px; }
.bad2 { --a: #edcdcc; --b: #efdfdc; font-size: 35px; }
.bad3 { --a: #e6c8c6; --b: #e6d9d5; }
.failed { position: absolute; right: 1px; bottom: 1px; font-size: 22px; line-height: 30px; font-weight: 700; }
```
